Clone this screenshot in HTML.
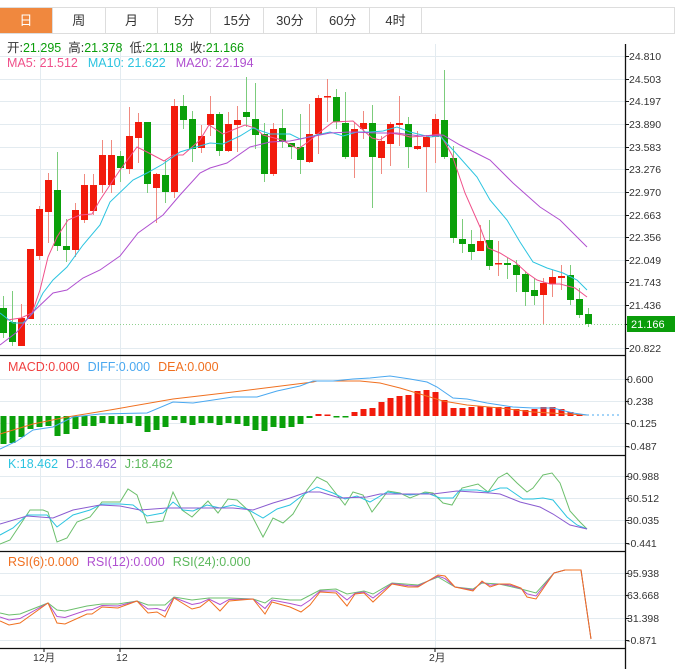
<!DOCTYPE html>
<html><head><meta charset="utf-8"><style>
body{margin:0;width:680px;height:669px;overflow:hidden;background:#fff;font-family:"Liberation Sans","Noto Sans CJK SC",sans-serif}
.tabs{position:absolute;left:0;top:7px;height:27px;width:675px;border:1px solid #ddd;border-left:none;box-sizing:border-box;display:flex}
.tabs div{width:52.8px;border-right:1px solid #ddd;box-sizing:border-box;text-align:center;line-height:25px;font-size:13px;color:#333}
.tabs .on{background:#f0883e;color:#fff}
svg{position:absolute;left:0;top:0}
</style></head><body>
<div class="tabs"><div class="on">日</div><div>周</div><div>月</div><div>5分</div><div>15分</div><div>30分</div><div>60分</div><div>4时</div></div>
<svg id="s" width="680" height="669" viewBox="0 0 680 669" font-family="Liberation Sans, Noto Sans CJK SC, sans-serif">
<g id="grid" stroke="#e3ebf0" stroke-width="1"></g>
<g id="shapes"></g>
<g font-size="12.5">
<text x="7" y="52" fill="#333">开:<tspan fill="#0a9d0a">21.295</tspan><tspan dx="7">高:</tspan><tspan fill="#0a9d0a">21.378</tspan><tspan dx="7">低:</tspan><tspan fill="#0a9d0a">21.118</tspan><tspan dx="7">收:</tspan><tspan fill="#0a9d0a">21.166</tspan></text>
<text x="7" y="67" fill="#f0508a">MA5: 21.512<tspan fill="#2cc4e0" dx="10">MA10: 21.622</tspan><tspan fill="#b050d0" dx="10">MA20: 22.194</tspan></text>
<text x="8" y="371" fill="#f04040">MACD:0.000<tspan fill="#4aa8f0" dx="8">DIFF:0.000</tspan><tspan fill="#f07020" dx="8">DEA:0.000</tspan></text>
<text x="8" y="468" fill="#2cc4e0">K:18.462<tspan fill="#8a5cd0" dx="8">D:18.462</tspan><tspan fill="#5cb85c" dx="8">J:18.462</tspan></text>
<text x="8" y="566" fill="#f07020">RSI(6):0.000<tspan fill="#b050d0" dx="8">RSI(12):0.000</tspan><tspan fill="#5cb85c" dx="8">RSI(24):0.000</tspan></text>
</g>
<g font-size="10.5" fill="#333">
<text x="629" y="60">24.810</text><text x="629" y="83">24.503</text><text x="629" y="105">24.197</text><text x="629" y="128">23.890</text><text x="629" y="151">23.583</text><text x="629" y="173">23.276</text><text x="629" y="196">22.970</text><text x="629" y="219">22.663</text><text x="629" y="241">22.356</text><text x="629" y="264">22.049</text><text x="629" y="286">21.743</text><text x="629" y="309">21.436</text><text x="629" y="352">20.822</text>
<text x="627" y="383">0.600</text><text x="627" y="405">0.238</text><text x="627" y="427">-0.125</text><text x="627" y="450">-0.487</text>
<text x="627" y="480">90.988</text><text x="627" y="502">60.512</text><text x="627" y="524">30.035</text><text x="627" y="547">-0.441</text>
<text x="627" y="577">95.938</text><text x="627" y="599">63.668</text><text x="627" y="622">31.398</text><text x="627" y="644">-0.871</text>
<text x="33" y="661">12月</text><text x="116" y="661">12</text><text x="429" y="661">2月</text>
</g>
<rect x="627" y="316" width="48" height="16" fill="#0a9d0a"/>
<text x="631" y="328" font-size="11" fill="#fff">21.166</text>
</svg>
<script>
var NS="http://www.w3.org/2000/svg",G=document.getElementById('shapes'),GR=document.getElementById('grid');
function el(p,t,a){var e=document.createElementNS(NS,t);for(var k in a)e.setAttribute(k,a[k]);p.appendChild(e);return e}
[56,79,101,124,147,169,192,215,237,260,282,305,348,379,401,423,446,476,498,520,543,573,595,618,640].forEach(function(y){el(GR,'line',{x1:0,x2:625,y1:y+.5,y2:y+.5})});
[40,120,435].forEach(function(x){el(GR,'line',{x1:x+.5,x2:x+.5,y1:44,y2:648})});
[355,455,551,648].forEach(function(y){el(G,'line',{x1:0,x2:625,y1:y+.5,y2:y+.5,stroke:'#111','stroke-width':1.3})});
el(G,'line',{x1:625.5,x2:625.5,y1:44,y2:669,stroke:'#111','stroke-width':1.3});
[56,79,101,124,147,169,192,215,237,260,282,305,324,348,379,401,423,446,476,498,520,543,573,595,618,640].forEach(function(y){el(G,'line',{x1:625,x2:629,y1:y+.5,y2:y+.5,stroke:'#111'})});
[44,120,435].forEach(function(x){el(G,'line',{x1:x,x2:x,y1:648,y2:652,stroke:'#111'})});
el(G,'line',{x1:0,x2:625,y1:324.5,y2:324.5,stroke:'#8fd08f','stroke-dasharray':'1,2'});
var C=[[308,333,296,338,0],[322,342,291,346,0],[318,346,304,346,1],[249,319,249,319,1],[209,256,206,260,1],[180,212,173,243,1],[190,246,152,251,0],[246,250,219,262,0],[210,250,203,257,1],[185,220,174,223,1],[185,211,174,215,1],[155,185,140,193,1],[155,185,140,193,1],[156,168,151,182,0],[136,169,107,174,1],[122,138,113,163,1],[122,184,122,193,0],[174,188,173,223,1],[175,192,160,203,0],[106,192,99,198,1],[106,120,95,129,0],[119,149,111,162,0],[136,148,125,153,1],[114,125,96,136,1],[114,151,112,156,0],[124,151,112,152,1],[120,125,106,152,1],[112,117,77,127,0],[119,135,83,149,0],[134,174,123,182,0],[129,174,123,176,1],[128,142,109,148,0],[143,147,143,159,0],[147,160,114,174,0],[134,162,104,163,1],[98,134,95,154,1],[96,97.5,79,122,1],[97,122,89,129,0],[123,157,92,159,0],[129,157,122,178,1],[123,129,111,139,1],[123,157,105,208,0],[141,158,136,174,1],[124,144,122,166,1],[123,125,96,146,1],[124,147,117,168,0],[146,149,131,150,1],[137,147,135,192,1],[119,137,114,163,1],[120,157,70,159,0],[158,238,146,243,0],[239,244,219,253,0],[244,252,230,260,0],[241,251,225,251,1],[240,266,220,270,0],[263,264.5,241,276,1],[263,265,258,279,0],[265,275,260,292,0],[274,292,272,306,0],[290,296,278,305,0],[283,295,278,324,1],[277,284,270,297,1],[276,278,265,290,1],[275,300,265,305,0],[299,315,288,318,0],[314,324,308,327,0]];
C.forEach(function(c,i){var x=3.5+9*i,r=c[4];
el(G,'line',{x1:x,x2:x,y1:c[2],y2:c[3],stroke:r?'#f08a80':'#7ccc7c'});
el(G,'rect',{x:x-3.5,y:c[0],width:7,height:Math.max(1.5,c[1]-c[0]),fill:r?'#f21b0c':'#0aa00a'});});
function pl(pts,col,w,dash){var a={points:pts.map(function(p){return p.join(',')}).join(' '),fill:'none',stroke:col,'stroke-width':w||1};if(dash)a['stroke-dasharray']=dash;el(G,'polyline',a)}
pl([[7,320],[21,318],[32,313],[40,290],[48,257],[57,237],[68,220],[80,215],[92,214],[100,200],[110,185],[120,170],[137,147],[147,152],[164,161],[173,155],[183,155],[200,140],[209,125],[223,134],[245,125],[255,128],[263,135],[282,140],[298,149],[308,142],[320,132],[333,122],[353,121],[363,130],[372,138],[380,140],[390,133],[403,135],[410,137],[425,136],[440,134],[452,155],[465,193],[480,227],[488,248],[500,253],[515,262],[527,273],[537,280],[550,284],[560,284],[575,288],[587,297]],'#f0508a');
pl([[0,313],[13,323],[23,323],[33,313],[43,293],[53,280],[67,267],[83,245],[100,225],[110,202],[133,180],[147,173],[163,164],[180,152],[193,148],[210,143],[223,144],[240,136],[253,128],[270,134],[290,134],[300,139],[317,135],[330,132],[343,136],[357,132],[370,132],[383,131],[397,127],[410,132],[430,137],[440,136],[453,150],[477,177],[490,200],[507,220],[520,242],[533,262],[547,268],[563,273],[577,280],[587,290]],'#2cc4e0');
pl([[0,345],[17,332],[33,312],[53,293],[67,290],[83,278],[100,270],[120,256],[138,233],[163,215],[180,195],[200,173],[210,168],[227,163],[250,147],[270,142],[290,141],[310,137],[330,133],[350,132],[377,133],[397,133],[420,136],[443,135],[460,145],[480,155],[490,160],[513,183],[540,207],[560,220],[587,247]],'#b050d0');
var Z=416,B=[444,443,437,429,427,426,436,434,429,426,426,423,424,424,423,426,432,430,427,420,423,425,423,423,425,423,424,426,430,431,427,428,427,424,418,414,414.5,417,417,412,409,408,402,398,396,395,391,390,392,400,408,408,407,406,407,407,407,409,410,409,407,407,409,412,414];
B.forEach(function(y,i){var x=3.5+9*i,up=y<Z;if(i==35||i==36)up=true;el(G,'rect',{x:x-3,y:Math.min(y,Z),width:6,height:Math.max(1.5,Math.abs(y-Z)),fill:up?'#f21b0c':'#0aa00a'})});
pl([[0,434],[33,424],[67,417],[110,410],[173,399],[233,392],[313,382],[317,381],[360,381],[380,383],[400,388],[420,394],[443,401],[467,405],[500,408],[533,412],[567,414],[587,415]],'#f07020');
pl([[0,449],[17,441],[33,430],[53,427],[73,417],[100,414],[147,413],[173,402],[193,403],[233,397],[257,397],[277,391],[300,386],[313,381],[333,381],[353,379],[370,378],[390,376],[410,379],[427,382],[437,387],[453,398],[467,399],[487,403],[513,407],[533,408],[553,408],[573,413],[587,415]],'#4aa8f0');
pl([[587,415],[620,415]],'#4aa8f0',1,'2,3');
pl([[0,544],[10,540],[30,510],[43,510],[48,512],[57,542],[67,538],[77,522],[90,517],[102,502],[120,502],[128,489],[137,495],[147,523],[163,521],[173,492],[182,510],[192,517],[208,501],[218,513],[228,499],[237,500],[250,512],[263,537],[273,518],[283,523],[293,514],[307,490],[317,477],[327,482],[345,505],[353,492],[363,495],[372,512],[388,491],[400,493],[410,498],[425,492],[433,493],[443,503],[452,505],[462,488],[478,484],[488,492],[498,478],[507,473],[517,483],[527,492],[533,488],[543,475],[552,473],[560,483],[570,511],[580,522],[587,529]],'#6cbf6c');
pl([[0,535],[13,528],[27,515],[47,515],[57,527],[73,515],[90,510],[102,504],[120,504],[133,505],[147,516],[163,513],[173,502],[183,510],[193,511],[207,505],[220,508],[233,505],[247,509],[263,518],[277,509],[290,505],[303,495],[317,487],[333,493],[345,499],[357,496],[370,502],[387,492],[410,495],[427,493],[440,498],[453,498],[460,490],[477,490],[488,492],[500,488],[507,488],[523,499],[533,499],[543,498],[553,500],[567,517],[577,525],[587,529]],'#2cc4e0');
pl([[0,524],[27,516],[53,518],[73,510],[100,505],[120,506],[140,510],[167,508],[187,508],[213,508],[233,508],[253,510],[273,503],[290,498],[307,492],[320,492],[340,498],[367,497],[380,494],[400,494],[433,494],[457,491],[473,492],[490,493],[500,494],[520,502],[540,507],[553,514],[570,525],[587,529]],'#8a5cd0');
var R6=[[0,621],[9,625],[20,623],[48,603],[57,623],[65,624],[87,614],[92,614],[102,607],[118,608],[137,601],[148,613],[157,612],[165,617],[174,598],[192,609],[200,607],[209,600],[220,611],[229,601],[253,599],[265,614],[272,602],[290,607],[301,612],[310,605],[320,592],[336,593],[347,606],[355,594],[364,593],[373,602],[392,584],[408,587],[418,587],[438,575],[445,576],[455,587],[473,591],[482,581],[490,587],[499,584],[510,584],[521,588],[527,597],[536,599],[554,573],[565,570],[581,570],[591,639]];
var R24=[[0,613],[9,615],[20,614],[48,603],[57,610],[65,611],[87,606],[102,604],[118,604],[137,601],[148,605],[165,605],[174,597],[192,600],[209,598],[229,598],[253,599],[265,603],[272,598],[290,600],[301,600],[320,590],[336,589],[347,594],[364,591],[373,594],[392,583],[418,585],[438,577],[455,587],[473,589],[482,583],[499,584],[521,589],[536,593],[554,573],[565,570],[581,570],[591,639]];
var R12=R6.map(function(p){var b=R24[0];for(var j=0;j<R24.length-1;j++){if(R24[j][0]<=p[0]&&R24[j+1][0]>=p[0]){var t=(p[0]-R24[j][0])/((R24[j+1][0]-R24[j][0])||1);b=[0,R24[j][1]+t*(R24[j+1][1]-R24[j][1])];break}}return [p[0],(p[1]+b[1])/2]});
pl(R24,'#6cbf6c');pl(R12,'#b050d0');pl(R6,'#f07020');
</script>
</body></html>
